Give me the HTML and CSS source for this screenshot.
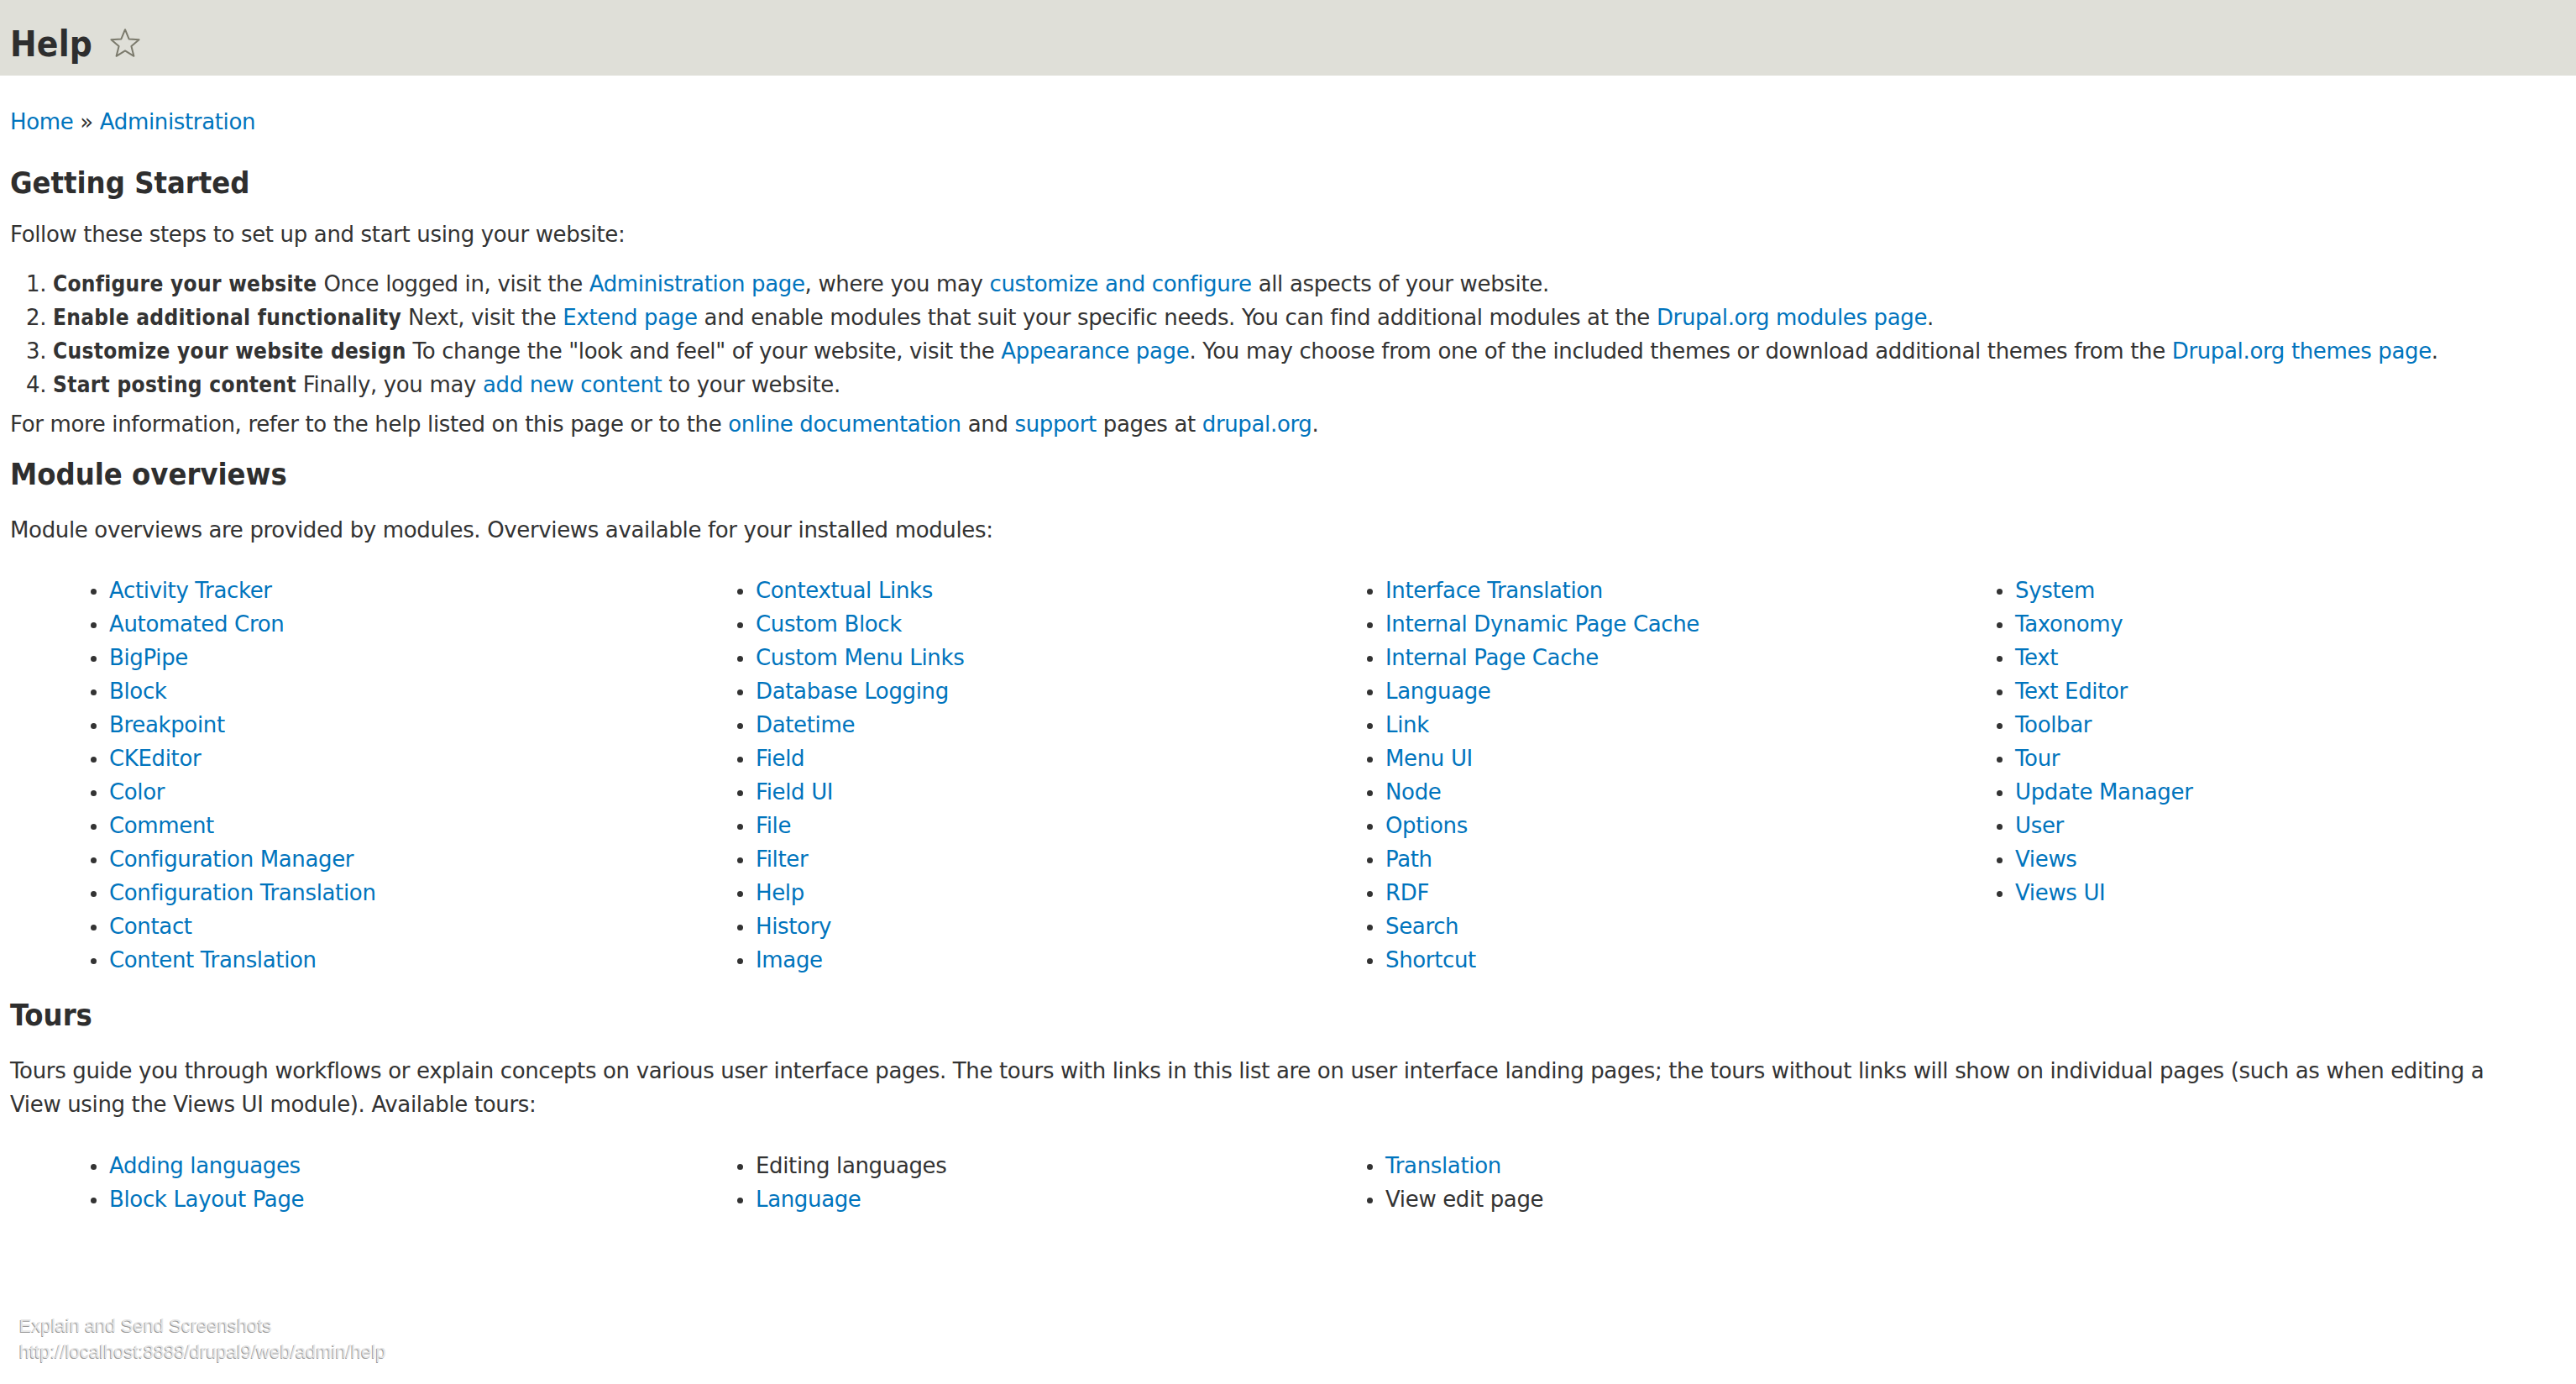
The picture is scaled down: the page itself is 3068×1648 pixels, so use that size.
FILE: index.html
```html
<!DOCTYPE html>
<html lang="en">
<head>
<meta charset="utf-8">
<title>Help</title>
<link rel="stylesheet" href="styles.css">
</head>
<body>
<header class="page-header">
  <h1 class="page-title">Help</h1>
  <svg class="shortcut-star" width="38" height="37" viewBox="0 0 38 37" aria-hidden="true">
    <path d="M19 2.2 L23.6 13.4 L35.6 14.2 L26.4 22 L29.4 33.8 L19 27.4 L8.6 33.8 L11.6 22 L2.4 14.2 L14.4 13.4 Z" fill="none" stroke="#7b7a6c" stroke-width="2" stroke-linejoin="round"/>
  </svg>
</header>

<main class="content">
  <nav class="breadcrumb"><a href="#">Home</a> » <a href="#">Administration</a></nav>

  <h2 class="heading heading-first">Getting Started</h2>
  <p class="intro">Follow these steps to set up and start using your website:</p>
  <ol class="steps">
    <li><strong>Configure your website</strong> Once logged in, visit the <a href="#">Administration page</a>, where you may <a href="#">customize and configure</a> all aspects of your website.</li>
    <li><strong>Enable additional functionality</strong> Next, visit the <a href="#">Extend page</a> and enable modules that suit your specific needs. You can find additional modules at the <a href="#">Drupal.org modules page</a>.</li>
    <li><strong>Customize your website design</strong> To change the "look and feel" of your website, visit the <a href="#">Appearance page</a>. You may choose from one of the included themes or download additional themes from the <a href="#">Drupal.org themes page</a>.</li>
    <li><strong>Start posting content</strong> Finally, you may <a href="#">add new content</a> to your website.</li>
  </ol>
  <p class="more-info">For more information, refer to the help listed on this page or to the <a href="#">online documentation</a> and <a href="#">support</a> pages at <a href="#">drupal.org</a>.</p>

  <h2 class="heading heading-second">Module overviews</h2>
  <p class="section-text">Module overviews are provided by modules. Overviews available for your installed modules:</p>
  <div class="columns modules">
    <div class="column">
      <ul class="items">
        <li><a href="#">Activity Tracker</a></li>
        <li><a href="#">Automated Cron</a></li>
        <li><a href="#">BigPipe</a></li>
        <li><a href="#">Block</a></li>
        <li><a href="#">Breakpoint</a></li>
        <li><a href="#">CKEditor</a></li>
        <li><a href="#">Color</a></li>
        <li><a href="#">Comment</a></li>
        <li><a href="#">Configuration Manager</a></li>
        <li><a href="#">Configuration Translation</a></li>
        <li><a href="#">Contact</a></li>
        <li><a href="#">Content Translation</a></li>
      </ul>
    </div>
    <div class="column">
      <ul class="items">
        <li><a href="#">Contextual Links</a></li>
        <li><a href="#">Custom Block</a></li>
        <li><a href="#">Custom Menu Links</a></li>
        <li><a href="#">Database Logging</a></li>
        <li><a href="#">Datetime</a></li>
        <li><a href="#">Field</a></li>
        <li><a href="#">Field UI</a></li>
        <li><a href="#">File</a></li>
        <li><a href="#">Filter</a></li>
        <li><a href="#">Help</a></li>
        <li><a href="#">History</a></li>
        <li><a href="#">Image</a></li>
      </ul>
    </div>
    <div class="column">
      <ul class="items">
        <li><a href="#">Interface Translation</a></li>
        <li><a href="#">Internal Dynamic Page Cache</a></li>
        <li><a href="#">Internal Page Cache</a></li>
        <li><a href="#">Language</a></li>
        <li><a href="#">Link</a></li>
        <li><a href="#">Menu UI</a></li>
        <li><a href="#">Node</a></li>
        <li><a href="#">Options</a></li>
        <li><a href="#">Path</a></li>
        <li><a href="#">RDF</a></li>
        <li><a href="#">Search</a></li>
        <li><a href="#">Shortcut</a></li>
      </ul>
    </div>
    <div class="column">
      <ul class="items">
        <li><a href="#">System</a></li>
        <li><a href="#">Taxonomy</a></li>
        <li><a href="#">Text</a></li>
        <li><a href="#">Text Editor</a></li>
        <li><a href="#">Toolbar</a></li>
        <li><a href="#">Tour</a></li>
        <li><a href="#">Update Manager</a></li>
        <li><a href="#">User</a></li>
        <li><a href="#">Views</a></li>
        <li><a href="#">Views UI</a></li>
      </ul>
    </div>
  </div>

  <h2 class="heading heading-third">Tours</h2>
  <p class="section-text">Tours guide you through workflows or explain concepts on various user interface pages. The tours with links in this list are on user interface landing pages; the tours without links will show on individual pages (such as when editing a View using the Views UI module). Available tours:</p>
  <div class="columns tours">
    <div class="column">
      <ul class="items">
        <li><a href="#">Adding languages</a></li>
        <li><a href="#">Block Layout Page</a></li>
      </ul>
    </div>
    <div class="column">
      <ul class="items">
        <li>Editing languages</li>
        <li><a href="#">Language</a></li>
      </ul>
    </div>
    <div class="column">
      <ul class="items">
        <li><a href="#">Translation</a></li>
        <li>View edit page</li>
      </ul>
    </div>
    <div class="column"></div>
  </div>
</main>

<div class="capture-note">
  <div>Explain and Send Screenshots</div>
  <div>http://localhost:8888/drupal9/web/admin/help</div>
</div>
</body>
</html>
```

FILE: styles.css
```css
html, body {
  margin: 0;
  padding: 0;
  background: #ffffff;
}

body {
  font-family: "DejaVu Sans", "Liberation Sans", sans-serif;
  font-size: 26px;
  line-height: 40px;
  color: #333333;
  letter-spacing: -0.35px;
  min-height: 1648px;
  position: relative;
}

p, ol, ul, h1, h2 {
  margin: 0;
}

a {
  color: #0074bd;
  text-decoration: none;
}

strong {
  font-family: "DejaVu Sans Condensed", "DejaVu Sans", sans-serif;
  font-stretch: semi-condensed;
  font-weight: bold;
  letter-spacing: 0.3px;
}

/* Header */
.page-header {
  background: #dfdfd8;
  height: 90px;
  box-sizing: border-box;
  padding: 33px 12px 0 12px;
  display: flex;
  align-items: flex-start;
}

.page-title {
  font-family: "DejaVu Sans Condensed", "DejaVu Sans", sans-serif;
  font-stretch: semi-condensed;
  font-size: 42px;
  line-height: 40px;
  font-weight: bold;
  letter-spacing: 0.2px;
  color: #2e2e2e;
}

.shortcut-star {
  display: block;
  margin-left: 20px;
}

/* Main content */
.content {
  padding: 0 56px 0 12px;
}

.breadcrumb {
  margin-top: 35px;
}

.heading {
  font-family: "DejaVu Sans Condensed", "DejaVu Sans", sans-serif;
  font-stretch: semi-condensed;
  font-size: 36px;
  line-height: 40px;
  font-weight: bold;
  letter-spacing: 0;
  color: #2e2e2e;
}

.heading-first { margin-top: 33px; }
.heading-second { margin-top: 20px; }
.heading-third { margin-top: 26px; }

.intro { margin-top: 21px; }

.steps {
  margin-top: 19px;
  padding-left: 51px;
}

.more-info { margin-top: 7px; }

.section-text { margin-top: 26px; }

.columns {
  display: flex;
  width: 3000px;
}

.modules { margin-top: 32px; }
.tours { margin-top: 33px; }

.column {
  flex: 0 0 25%;
  box-sizing: border-box;
}

.column + .column {
  padding-left: 20px;
}

.items {
  list-style: none;
  padding-left: 96px;
}

.items li {
  display: flex;
}

.items li::before {
  content: "";
  flex: 0 0 7px;
  height: 7px;
  margin: 18px 15px 0 0;
  border-radius: 50%;
  background: #333333;
}

/* Screenshot tool overlay */
.capture-note {
  position: absolute;
  left: 23px;
  top: 1563px;
  font-family: "Liberation Sans", Arial, sans-serif;
  font-size: 22px;
  line-height: 31px;
  letter-spacing: 0;
  color: #e6e6e6;
  text-shadow: -1px 1px 0 #999999;
}
```
